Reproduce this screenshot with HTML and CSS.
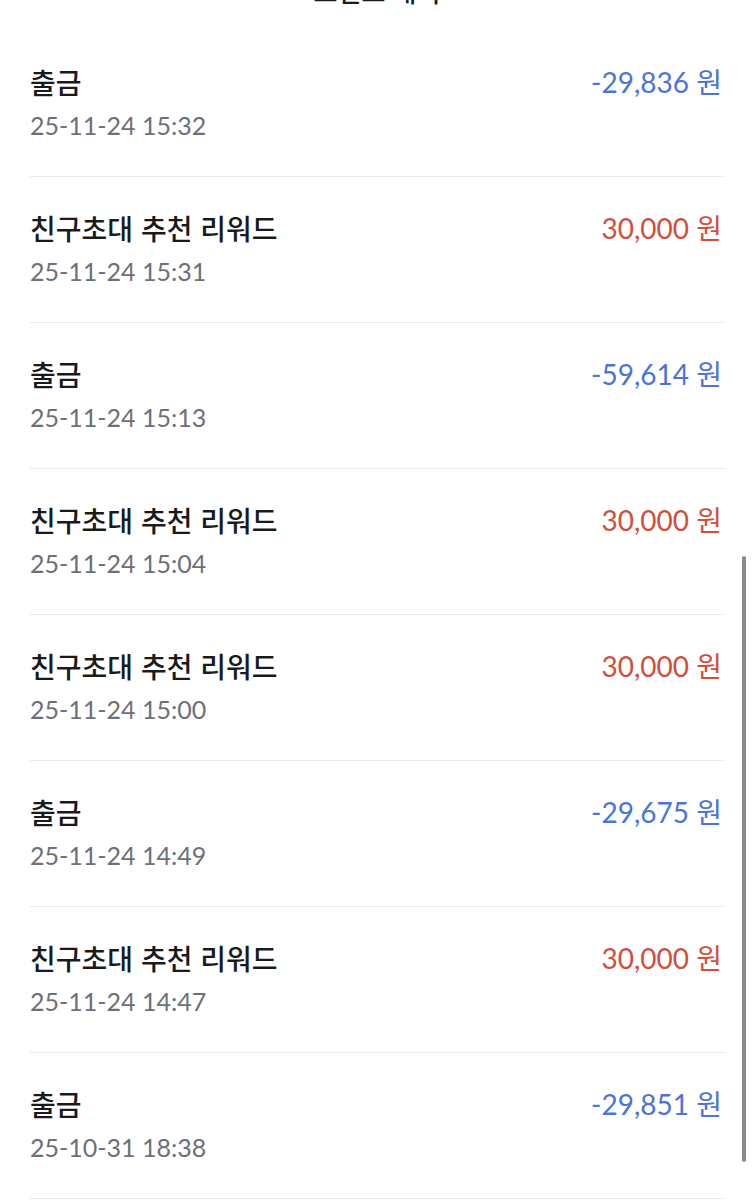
FILE: index.html
```html
<!DOCTYPE html>
<html lang="ko">
<head>
<meta charset="utf-8">
<link rel="stylesheet" href="styles.css">
</head>
<body>
<div class="page">
  <header class="topbar">
    <svg class="back" width="14" height="24" viewBox="0 0 14 24"><path d="M12 2 L3 12 L12 22" fill="none" stroke="#1a1a1a" stroke-width="2.6" stroke-linecap="round" stroke-linejoin="round"/></svg>
    <span class="title">포인트 내역</span>
  </header>
  <ul class="list">
    <li class="row"><div class="info"><div class="name">출금</div><div class="date">25-11-24 15:32</div></div><div class="amt out">-29,836 원</div></li>
    <li class="row"><div class="info"><div class="name">친구초대 추천 리워드</div><div class="date">25-11-24 15:31</div></div><div class="amt in">30,000 원</div></li>
    <li class="row"><div class="info"><div class="name">출금</div><div class="date">25-11-24 15:13</div></div><div class="amt out">-59,614 원</div></li>
    <li class="row"><div class="info"><div class="name">친구초대 추천 리워드</div><div class="date">25-11-24 15:04</div></div><div class="amt in">30,000 원</div></li>
    <li class="row"><div class="info"><div class="name">친구초대 추천 리워드</div><div class="date">25-11-24 15:00</div></div><div class="amt in">30,000 원</div></li>
    <li class="row"><div class="info"><div class="name">출금</div><div class="date">25-11-24 14:49</div></div><div class="amt out">-29,675 원</div></li>
    <li class="row"><div class="info"><div class="name">친구초대 추천 리워드</div><div class="date">25-11-24 14:47</div></div><div class="amt in">30,000 원</div></li>
    <li class="row"><div class="info"><div class="name">출금</div><div class="date">25-10-31 18:38</div></div><div class="amt out">-29,851 원</div></li>
  </ul>
  <div class="scrollbar"></div>
</div>
</body>
</html>
```
FILE: styles.css
```css
html, body {
  margin: 0;
  padding: 0;
  background: #ffffff;
}
body {
  font-family: Lato, "Noto Sans CJK KR", sans-serif;
  color: #1c1c1e;
  overflow: hidden;
}
.page {
  position: relative;
  width: 754px;
  height: 1200px;
  overflow: hidden;
}
.topbar {
  display: flex;
  align-items: center;
  justify-content: center;
  height: 61px;
  margin-top: -30px;
  padding-bottom: 20px;
  box-sizing: border-box;
  position: relative;
  font-family: "Noto Sans CJK KR", sans-serif;
  font-size: 26px;
  font-weight: 500;
  color: #1a1a1a;
}
.back {
  position: absolute;
  left: 26px;
  top: 6px;
}
.list {
  list-style: none;
  margin: 0;
  padding: 0 30px;
}
.row {
  display: flex;
  justify-content: space-between;
  align-items: flex-start;
  height: 146px;
  border-bottom: 1.5px solid #ebebeb;
  box-sizing: border-box;
  padding-top: 29px;
}
.name {
  font-family: "Noto Sans CJK KR", sans-serif;
  font-size: 28px;
  font-weight: 500;
  line-height: 44px;
  color: #1a1a1a;
}
.date {
  font-size: 25px;
  line-height: 42px;
  color: #6c7079;
}
.amt {
  font-size: 28px;
  line-height: 44px;
  padding-right: 2px;
}
.out { color: #4b74d6; }
.in { color: #cf503d; }
.scrollbar {
  position: absolute;
  right: 8px;
  top: 556px;
  width: 4px;
  height: 606px;
  border-radius: 2px;
  background: #8a8a8a;
}
```
